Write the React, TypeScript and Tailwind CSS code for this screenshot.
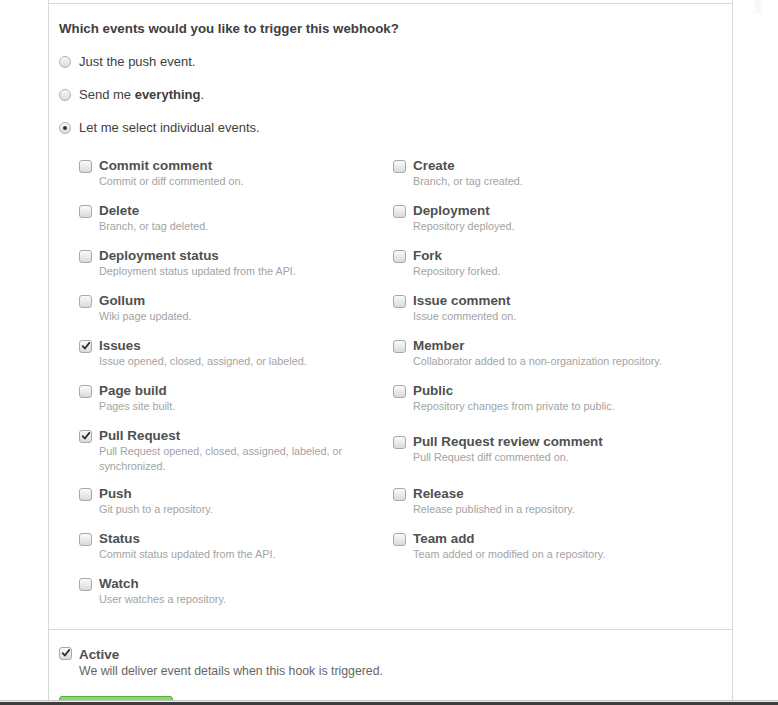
import React from "react";

type Ev = { title: string; desc: string; checked?: boolean; cls?: string };

const events: Ev[] = [
  { title: "Commit comment", desc: "Commit or diff commented on." },
  { title: "Create", desc: "Branch, or tag created." },
  { title: "Delete", desc: "Branch, or tag deleted." },
  { title: "Deployment", desc: "Repository deployed." },
  { title: "Deployment status", desc: "Deployment status updated from the API." },
  { title: "Fork", desc: "Repository forked." },
  { title: "Gollum", desc: "Wiki page updated." },
  { title: "Issue comment", desc: "Issue commented on." },
  { title: "Issues", desc: "Issue opened, closed, assigned, or labeled.", checked: true },
  { title: "Member", desc: "Collaborator added to a non-organization repository." },
  { title: "Page build", desc: "Pages site built." },
  { title: "Public", desc: "Repository changes from private to public." },
  { title: "Pull Request", desc: "Pull Request opened, closed, assigned, labeled, or synchronized.", checked: true, cls: "mb-[12px]" },
  { title: "Pull Request review comment", desc: "Pull Request diff commented on.", cls: "mt-[6px]" },
  { title: "Push", desc: "Git push to a repository." },
  { title: "Release", desc: "Release published in a repository." },
  { title: "Status", desc: "Commit status updated from the API." },
  { title: "Team add", desc: "Team added or modified on a repository." },
  { title: "Watch", desc: "User watches a repository." },
];

function Checkbox({ checked, className = "" }: { checked?: boolean; className?: string }) {
  return (
    <div
      className={
        "relative w-[13px] h-[13px] shrink-0 rounded-[3px] border border-[#a9a9a9] bg-gradient-to-b from-[#fbfbfb] to-[#dadada] " +
        className
      }
    >
      {checked && (
        <svg viewBox="0 0 12 12" className="absolute left-[1px] top-[0px] w-[10px] h-[10px]">
          <path d="M2 6.2 L4.6 9 L10 2.2" fill="none" stroke="#2b2b2b" strokeWidth="2.1" strokeLinecap="round" strokeLinejoin="round" />
        </svg>
      )}
    </div>
  );
}

function Radio({ checked }: { checked?: boolean }) {
  return (
    <div className="mt-[4px] w-[12px] h-[12px] shrink-0 rounded-full border border-[#b0b0b0] bg-gradient-to-b from-[#fafafa] to-[#d9d9d9] flex items-center justify-center">
      {checked && <div className="w-[4px] h-[4px] rounded-full bg-[#333]" />}
    </div>
  );
}

export default function App() {
  return (
    <div
      className="relative min-h-[705px] bg-white overflow-hidden"
      style={{ fontFamily: '"Liberation Sans", Arial, Helvetica, sans-serif' }}
    >
      <div className="pointer-events-none absolute left-[752px] top-0 w-[12px] h-[14px] bg-gradient-to-r from-transparent via-[#f2f2f2] to-transparent opacity-70" />
      <div className="ml-[48px] w-[685px] border-x border-[#d8d8d8]">
        <div className="h-[3px]" />
        <div className="border-t border-[#d8d8d8] pl-[10px] pt-[15px] pb-[8px]">
          <div className="text-[13.3px] leading-[20px] font-bold text-[#404040]">
            Which events would you like to trigger this webhook?
          </div>
          <div className="mt-[13px] flex flex-col gap-[13px] text-[13px] leading-[20px] text-[#404040]">
            <div className="flex gap-[8px]">
              <Radio />
              <span>Just the push event.</span>
            </div>
            <div className="flex gap-[8px]">
              <Radio />
              <span>
                Send me <b>everything</b>.
              </span>
            </div>
            <div className="flex gap-[8px]">
              <Radio checked />
              <span>Let me select individual events.</span>
            </div>
          </div>
          <div className="mt-[20px] ml-[20px] grid grid-cols-[314px_314px] items-start">
            {events.map((e) => (
              <div key={e.title} className={"flex gap-[7px] " + (e.cls ?? "mb-[14px]")}>
                <Checkbox checked={e.checked} className="mt-[2px]" />
                <div className="pr-[20px]">
                  <div className="text-[13.4px] leading-[16px] font-bold text-[#505050]">{e.title}</div>
                  <div className="text-[10.8px] leading-[15px] text-[#a3a3a3]">{e.desc}</div>
                </div>
              </div>
            ))}
          </div>
        </div>
        <div className="border-t border-[#d8d8d8] pl-[10px] pt-[17px] pb-[20px]">
          <div className="flex gap-[7px]">
            <Checkbox checked />
            <div>
              <div className="text-[13.4px] leading-[16px] font-bold text-[#505050]">Active</div>
              <div className="text-[12.3px] leading-[16px] text-[#666]">
                We will deliver event details when this hook is triggered.
              </div>
            </div>
          </div>
          <div className="mt-[17px] w-[114px] h-[34px] rounded-[3px] border border-[#5ca941] bg-gradient-to-b from-[#86de66] to-[#6cc644]" />
        </div>
      </div>
      <div className="fixed left-0 right-0 bottom-0 h-[5px] flex flex-col">
        <div className="h-[1px] bg-[#c4c4c4]" />
        <div className="h-[1px] bg-[#ececec]" />
        <div className="h-[3px] bg-[#3e3e3e]" />
      </div>
    </div>
  );
}
